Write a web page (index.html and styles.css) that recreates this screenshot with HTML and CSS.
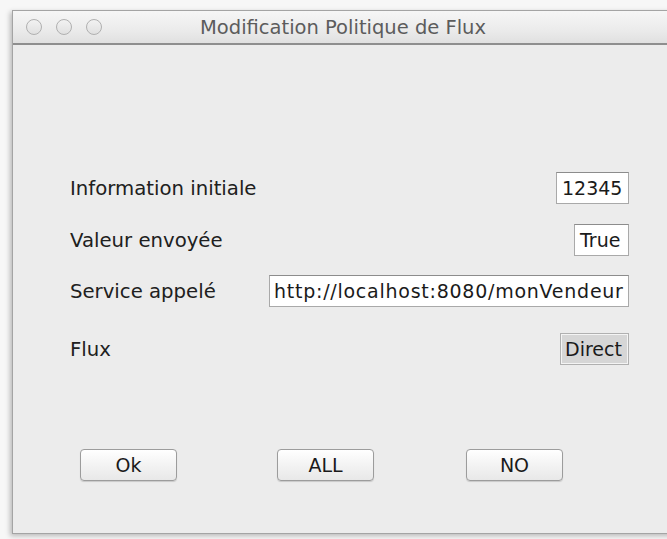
FILE: index.html
```html
<!DOCTYPE html>
<html lang="fr">
<head>
<meta charset="utf-8">
<title>Modification Politique de Flux</title>
<link rel="stylesheet" href="styles.css">
</head>
<body>
<div class="window">
  <div class="titlebar">
    <div class="lights">
      <span class="light"></span>
      <span class="light"></span>
      <span class="light"></span>
    </div>
    <div class="title">Modification Politique de Flux</div>
  </div>
  <div class="content">
    <div class="form">
      <div class="row row-info">
        <span class="label">Information initiale</span>
        <span class="field field-info">12345</span>
      </div>
      <div class="row row-value">
        <span class="label">Valeur envoyée</span>
        <span class="field field-value">True</span>
      </div>
      <div class="row row-service">
        <span class="label">Service appelé</span>
        <span class="field field-url">http://localhost:8080/monVendeur</span>
      </div>
      <div class="row row-flux">
        <span class="label">Flux</span>
        <span class="field field-selected">Direct</span>
      </div>
    </div>
    <div class="actions">
      <button class="btn btn-ok">Ok</button>
      <button class="btn btn-all">ALL</button>
      <button class="btn btn-no">NO</button>
    </div>
  </div>
</div>
</body>
</html>
```
FILE: styles.css
```css
html, body {
  margin: 0;
  padding: 0;
}

body {
  width: 667px;
  height: 539px;
  overflow: hidden;
  background: #f7f7f7;
  font-family: "DejaVu Sans", "Liberation Sans", sans-serif;
  color: #1e1e1e;
}

.window {
  margin: 10px 0 0 12px;
  width: 680px;
  height: 522px;
  border: 1px solid #a4a4a4;
  border-right: none;
  background: #ececec;
  box-shadow: -2px 2px 5px rgba(0, 0, 0, 0.25);
  display: flex;
  flex-direction: column;
}

.titlebar {
  height: 32px;
  flex: none;
  display: flex;
  align-items: center;
  position: relative;
  background: linear-gradient(#f6f6f6, #ebebeb 60%, #e0e0e0);
  border-bottom: 2px solid #8e8e8e;
}

.lights {
  display: flex;
  gap: 14px;
  padding-left: 13px;
}

.light {
  width: 14px;
  height: 14px;
  border: 1px solid #b0b0b0;
  border-radius: 50%;
  background: linear-gradient(#f2f2f2, #e0e0e0);
}

.title {
  position: absolute;
  left: 187px;
  top: 5px;
  font-size: 19.5px;
  color: #5c5c5c;
}

.content {
  flex: 1;
  display: flex;
  flex-direction: column;
  padding: 127px 0 0 57px;
}

.form {
  width: 559px;
  display: flex;
  flex-direction: column;
}

.row {
  display: flex;
  justify-content: space-between;
  align-items: center;
  height: 32px;
}

.row-value { margin-top: 20px; }
.row-service { margin-top: 19px; }
.row-flux { margin-top: 26px; }

.label {
  font-size: 19.7px;
  color: #202020;
}

.field {
  box-sizing: border-box;
  height: 32px;
  line-height: 30px;
  padding: 0 5px;
  border: 1px solid #a9a9a9;
  border-top-color: #8c8c8c;
  background: #ffffff;
  font-size: 19px;
  color: #1a1a1a;
}

.field-info { width: 73px; }
.field-value { width: 55px; }

.field-url {
  width: 360px;
  letter-spacing: 0.75px;
  padding: 0 4px;
}

.field-selected {
  width: 69px;
  background: #d6d6d6;
  padding: 0 4px;
  border-color: #b0b0b0;
  box-shadow: inset 0 0 0 1px #f4f4f4;
}

.actions {
  display: flex;
  margin-top: 84px;
  padding-left: 10px;
}

.btn {
  width: 97px;
  height: 32px;
  padding: 0;
  border: 1px solid #9c9c9c;
  border-radius: 4px;
  background: linear-gradient(#ffffff, #f3f3f3 50%, #e8e8e8);
  box-shadow: 0 1px 1px rgba(0, 0, 0, 0.15);
  font-family: "DejaVu Sans", "Liberation Sans", sans-serif;
  font-size: 19px;
  color: #1a1a1a;
}

.btn-all { margin-left: 100px; }
.btn-no { margin-left: 92px; }
```
